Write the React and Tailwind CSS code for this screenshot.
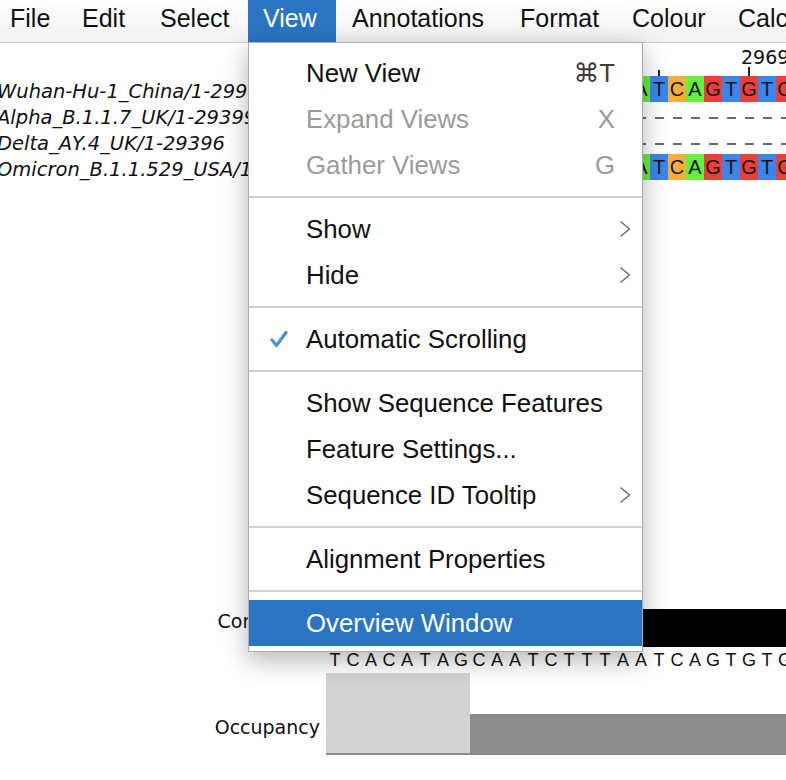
import React from 'react'

const MENUBAR = [
  { label: 'File', box: 'w-[66px] pl-[10px]' },
  { label: 'Edit', box: 'w-[78px] pl-[16px]' },
  { label: 'Select', box: 'w-[104px] pl-[16px]' },
  { label: 'View', box: 'w-[88px] pl-[15px]', open: true },
  { label: 'Annotations', box: 'w-[168px] pl-[16px]' },
  { label: 'Format', box: 'w-[112px] pl-[16px]' },
  { label: 'Colour', box: 'w-[106px] pl-[16px]' },
  { label: 'Calculate', box: 'w-[120px] pl-[16px]' },
]

const MENU = [
  { label: 'New View', shortcut: '⌘T' },
  { label: 'Expand Views', shortcut: 'X', disabled: true },
  { label: 'Gather Views', shortcut: 'G', disabled: true },
  'sep',
  { label: 'Show', sub: true },
  { label: 'Hide', sub: true },
  'sep',
  { label: 'Automatic Scrolling', checked: true },
  'sep',
  { label: 'Show Sequence Features' },
  { label: 'Feature Settings...' },
  { label: 'Sequence ID Tooltip', sub: true },
  'sep',
  { label: 'Alignment Properties' },
  'sep',
  { label: 'Overview Window', active: true },
]

const NAMES = [
  'Wuhan-Hu-1_China/1-29903',
  'Alpha_B.1.1.7_UK/1-29399',
  'Delta_AY.4_UK/1-29396',
  'Omicron_B.1.1.529_USA/1-29903',
]

const CONSENSUS = 'TCACATAGCAATCTTTAATCAGTGTG'
const ROWS = [CONSENSUS, '-'.repeat(26), '-'.repeat(26), CONSENSUS]

const BASE_BG = {
  A: 'bg-[#64f03c]',
  C: 'bg-[#fbad3c]',
  G: 'bg-[#e8403b]',
  T: 'bg-[#3a86ec]',
}

function Chevron() {
  return (
    <svg width="12" height="18" viewBox="0 0 12 18" fill="none">
      <path d="M1.5 1.5 L10.5 9 L1.5 16.5" stroke="#707070" strokeWidth="1.6" strokeLinejoin="round" />
    </svg>
  )
}

function Check() {
  return (
    <svg width="18" height="18" viewBox="0 0 18 18" fill="none">
      <path d="M2 10 L6.5 15.5 L16 2.5" stroke="#4a8fe0" strokeWidth="3.2" strokeLinecap="round" strokeLinejoin="round" />
    </svg>
  )
}

function ViewMenu() {
  return (
    <div className="absolute left-[248px] top-[42px] w-[395px] h-[610px] bg-white border border-[#ababab] pt-[7px] shadow-[0_8px_24px_rgba(0,0,0,0.3)] font-['Liberation_Sans','DejaVu_Sans',sans-serif] text-[25.8px]">
      {MENU.map((item, i) => {
        if (item === 'sep') {
          return (
            <div key={i} className="h-[18px] flex items-center">
              <div className="h-[2px] w-full bg-[#d0d0d0]" />
            </div>
          )
        }
        return (
          <div
            key={i}
            className={`relative h-[46px] flex items-center pl-[57px] pr-[27px] pt-[1px] leading-none ${
              item.active ? 'bg-[#2a74c1] text-white' : item.disabled ? 'text-[#9b9b9b]' : 'text-[#111]'
            }`}
          >
            {item.checked && (
              <span className="absolute left-[21px] top-[14px]">
                <Check />
              </span>
            )}
            <span className="flex-1">{item.label}</span>
            {item.shortcut && (
              <span className={item.disabled ? 'text-[#9b9b9b]' : 'text-[#3c3c3c]'}>{item.shortcut}</span>
            )}
            {item.sub && (
              <span className="absolute right-[11px] top-[14px]">
                <Chevron />
              </span>
            )}
          </div>
        )
      })}
    </div>
  )
}

export default function App() {
  return (
    <div className="relative w-[786px] h-[780px] overflow-hidden bg-white">
      {/* Menu bar */}
      <div className="flex h-[43px] border-b border-[#cdcdcd] bg-linear-to-b from-white to-[#f1f1f1] font-['Liberation_Sans','DejaVu_Sans',sans-serif] text-[25px] text-[#111] whitespace-nowrap">
        {MENUBAR.map((m) => (
          <div
            key={m.label}
            className={`shrink-0 h-full flex items-center pb-[4px] ${m.box} ${m.open ? 'bg-[#2a74c1] text-white' : ''}`}
          >
            {m.label}
          </div>
        ))}
      </div>

      <div className="flex">
        {/* ID panel */}
        <div className="w-[326px] shrink-0 overflow-hidden font-['DejaVu_Sans',sans-serif] text-[#111]">
          <div className="h-[33px]" />
          <div className="pt-[3px] h-[533px] -ml-[3px]">
            {NAMES.map((n) => (
              <div key={n} className="h-[26px] leading-[26px] italic text-[19.5px] whitespace-nowrap">
                {n}
              </div>
            ))}
          </div>
          <div className="h-[64px] text-right pr-[6px] text-[19px] leading-[24px]">Consensus</div>
          <div className="h-[82px] text-right pr-[6px] text-[19px] leading-[24px] pt-[42px]">Occupancy</div>
        </div>

        {/* Sequence panel */}
        <div className="flex-1 overflow-hidden">
          {/* Ruler */}
          <div className="relative h-[33px] font-['DejaVu_Sans',sans-serif] text-[19px] text-[#111]">
            <span className="absolute left-[415px] top-[2px] leading-[24px]">29690</span>
            <div className="absolute left-[332px] top-[27px] w-[2px] h-[6px] bg-[#222]" />
            <div className="absolute left-[422px] top-[24px] w-[2px] h-[9px] bg-[#222]" />
          </div>

          {/* Alignment rows */}
          <div className="h-[533px]">
            {ROWS.map((row, r) => (
              <div key={r} className="flex h-[26px] font-['Liberation_Sans',sans-serif] text-[20px] text-[#151515]">
                {row.split('').map((c, i) =>
                  c === '-' ? (
                    <div key={i} className="w-[18px] shrink-0 flex items-center justify-center pt-[5px]">
                      <div className="w-[9px] h-[2px] bg-[#6a6a6a]" />
                    </div>
                  ) : (
                    <div key={i} className={`w-[18px] shrink-0 flex items-center justify-center ${BASE_BG[c]}`}>
                      {c}
                    </div>
                  )
                )}
              </div>
            ))}
          </div>

          {/* Consensus annotation */}
          <div className="h-[38px] bg-black" />
          <div className="flex h-[26px] font-['Liberation_Sans',sans-serif] text-[18px] text-[#111] leading-none pt-[4px]">
            {CONSENSUS.split('').map((c, i) => (
              <div key={i} className="w-[18px] shrink-0 text-center">
                {c}
              </div>
            ))}
          </div>

          {/* Occupancy annotation */}
          <div className="flex items-end h-[82px] border-b-[2px] border-[#8a8a8a]">
            <div className="w-[144px] h-[80px] bg-[#d3d3d3]" />
            <div className="flex-1 h-[39px] bg-[#8c8c8c]" />
          </div>
        </div>
      </div>

      <ViewMenu />
    </div>
  )
}
